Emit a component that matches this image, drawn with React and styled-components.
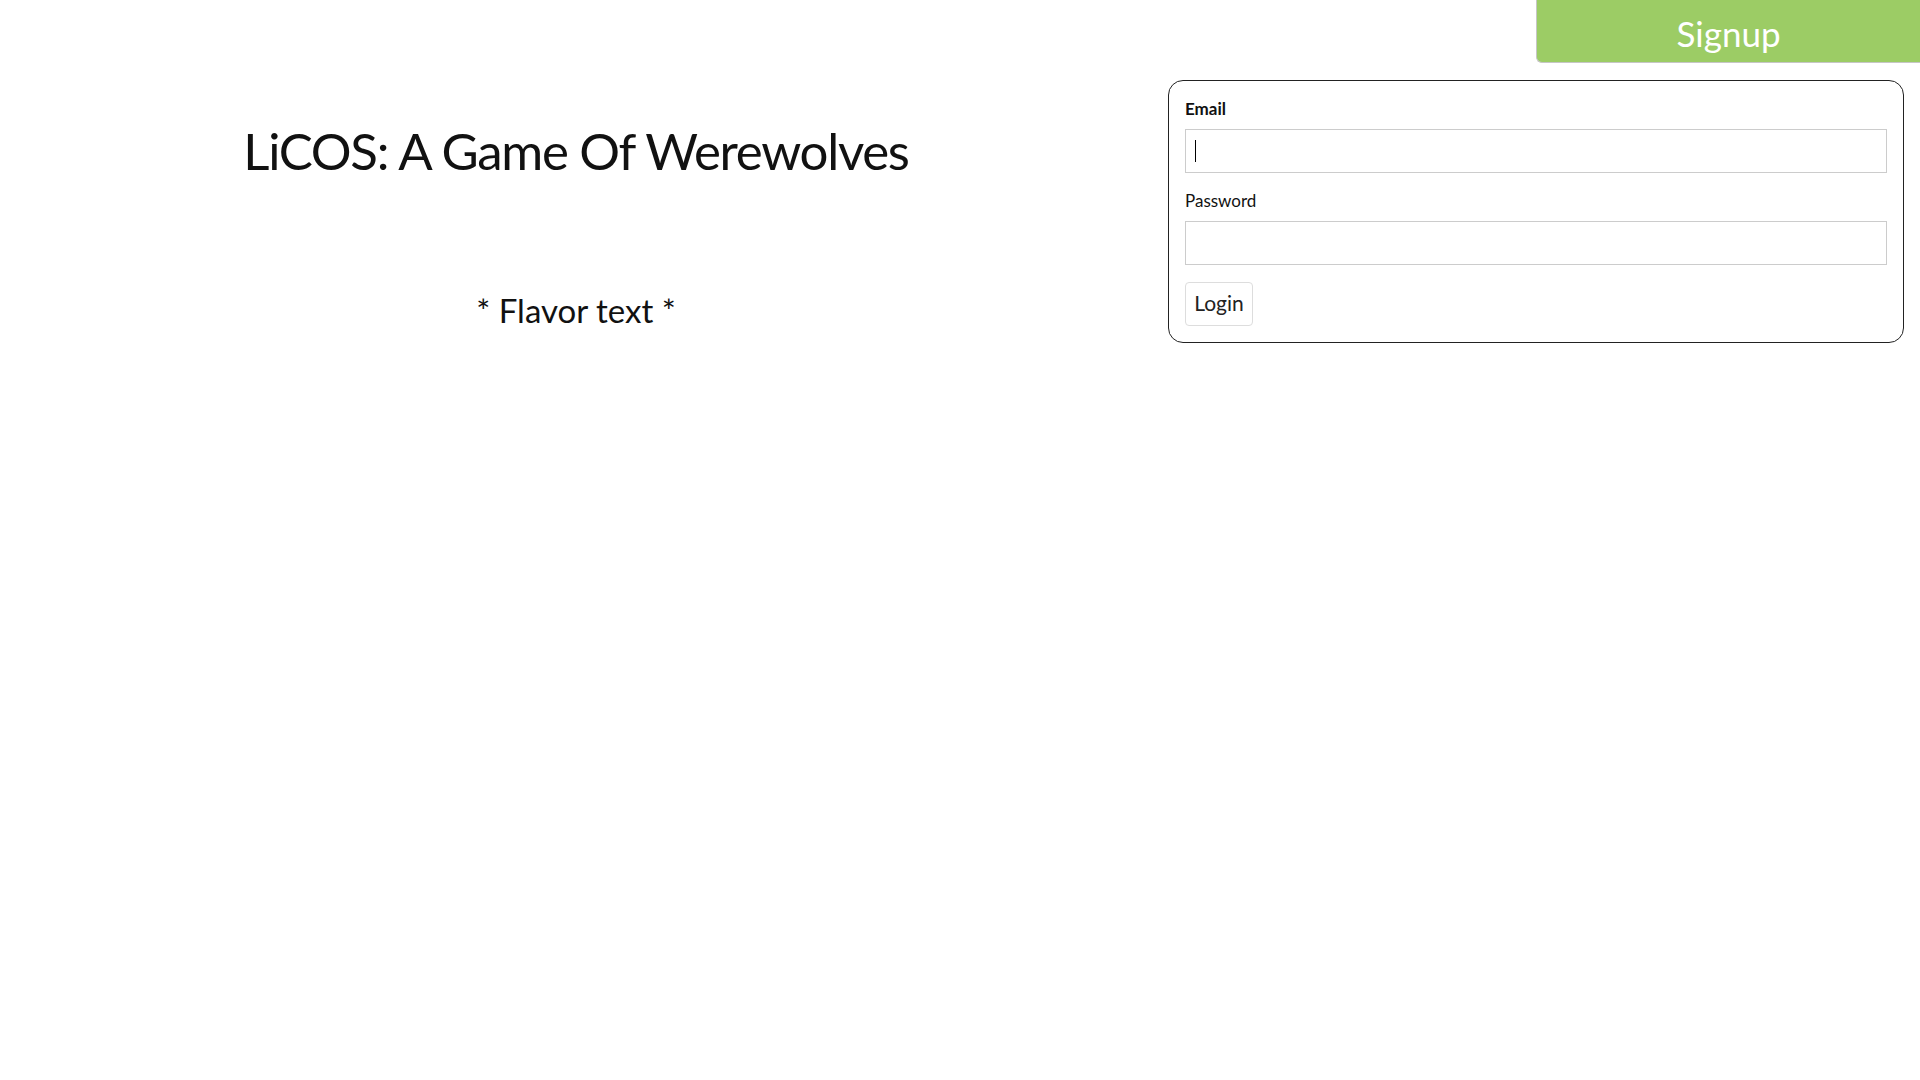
import React, { useState } from "react";
import styled, { createGlobalStyle } from "styled-components";

const GlobalStyle = createGlobalStyle`
  html, body {
    margin: 0;
    padding: 0;
    background: #fff;
    font-family: "Lato", "Noto Sans", sans-serif;
    color: #111;
  }
`;

const Page = styled.div`
  display: grid;
  grid-template-columns: 60% 40%;
  width: 100%;
  min-height: 100vh;
`;

const Intro = styled.div`
  display: flex;
  flex-direction: column;
  align-items: center;
  padding-top: 125px;
`;

const Title = styled.h1`
  margin: 0;
  font-size: 51px;
  font-weight: 400;
  line-height: 1;
  letter-spacing: -1.3px;
`;

const Flavor = styled.p`
  margin: 118px 0 0;
  font-size: 33px;
  line-height: 1;
`;

const Side = styled.div`
  display: flex;
  flex-direction: column;
  align-items: flex-end;
`;

const SignupButton = styled.button`
  width: 50%;
  height: 63px;
  padding: 3px 0 0;
  border: 1px solid #c6c6c6;
  border-right: none;
  border-top: none;
  border-radius: 0 0 0 6px;
  background: #9ccc65;
  color: #fff;
  font-family: inherit;
  font-size: 35px;
  cursor: pointer;
`;

const LoginBox = styled.form`
  align-self: stretch;
  margin: 17px 16px 0;
  padding: 16px;
  border: 1px solid #222;
  border-radius: 15px;
`;

const Field = styled.div`
  margin-bottom: ${(p) => (p.last ? "17px" : "16px")};
`;

const Label = styled.label`
  display: block;
  height: 24px;
  margin-bottom: 8px;
  font-size: 17px;
  line-height: 24px;
  font-weight: ${(p) => (p.strong ? 700 : 400)};
`;

const InputWrap = styled.div`
  position: relative;
`;

const Caret = styled.span`
  position: absolute;
  left: 10px;
  top: 11px;
  width: 1px;
  height: 22px;
  background: #000;
  pointer-events: none;
`;

const Input = styled.input`
  display: block;
  box-sizing: border-box;
  width: 100%;
  height: 44px;
  padding: 0 8px;
  border: 1px solid #ccc;
  border-radius: 0;
  font-family: inherit;
  font-size: 18px;
  caret-color: #000;
  &:focus {
    outline: none;
  }
`;

const LoginButton = styled.button`
  box-sizing: border-box;
  width: 68px;
  height: 44px;
  padding: 0 6px 4px;
  border: 1px solid #ddd;
  border-radius: 4px;
  background: #fff;
  color: #222;
  font-family: inherit;
  font-size: 21px;
  cursor: pointer;
`;

export default function App() {
  const [email, setEmail] = useState("");
  const [password, setPassword] = useState("");

  const handleSubmit = (e) => {
    e.preventDefault();
  };

  return (
    <>
      <GlobalStyle />
      <Page>
        <Intro>
          <Title>LiCOS: A Game Of Werewolves</Title>
          <Flavor>* Flavor text *</Flavor>
        </Intro>
        <Side>
          <SignupButton type="button">Signup</SignupButton>
          <LoginBox onSubmit={handleSubmit}>
            <Field>
              <Label strong htmlFor="email">Email</Label>
              <InputWrap>
                <Input
                  id="email"
                  type="email"
                  value={email}
                  onChange={(e) => setEmail(e.target.value)}
                />
                {email === "" && <Caret />}
              </InputWrap>
            </Field>
            <Field last>
              <Label htmlFor="password">Password</Label>
              <Input
                id="password"
                type="password"
                value={password}
                onChange={(e) => setPassword(e.target.value)}
              />
            </Field>
            <LoginButton type="submit">Login</LoginButton>
          </LoginBox>
        </Side>
      </Page>
    </>
  );
}
